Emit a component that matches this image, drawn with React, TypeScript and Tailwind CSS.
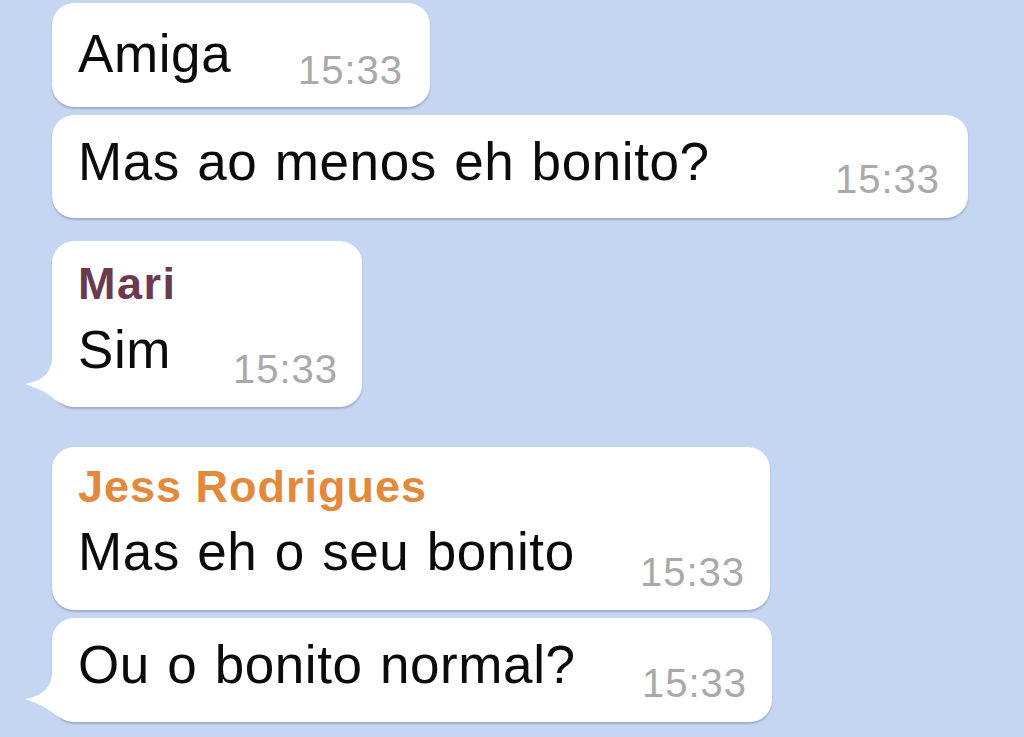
const FONT = "font-['Liberation_Sans',Arial,sans-serif]";

function Tail() {
    return (
        <svg className="absolute -left-[30px] bottom-0 -z-10" width="60" height="50" viewBox="0 0 60 50">
            <path d="M30 0 C30 14 22 24 3 27 C14 31 22 34 30 40 C36 46 44 50 60 50 L60 0 Z" fill="#ffffff" />
        </svg>
    );
}

function Time({ className }: { className: string }) {
    return (
        <span className={`text-[40px] leading-[48px] tracking-[1px] text-[#a9a9ab] ${className}`}>
            15:33
        </span>
    );
}

const MSG = "text-[53px] leading-[60px] text-[#0b0b0b] tracking-[0.6px] [word-spacing:2px]";
const BUBBLE = "relative isolate rounded-[22px] bg-white pl-[26px] shadow-[0_2px_2px_rgba(60,70,90,0.28)]";

export default function App() {
    return (
        <div className={`min-h-screen w-full bg-[#c5d6f2] pt-[3px] pl-[52px] ${FONT}`}>
            {/* Amiga */}
            <div className={`${BUBBLE} flex h-[104px] w-[378px] items-start justify-between pr-[27px]`}>
                <span className={`mt-[21px] ${MSG}`}>Amiga</span>
                <Time className="mt-[43px]" />
            </div>

            {/* Mas ao menos */}
            <div className={`${BUBBLE} mt-[8px] flex h-[103px] w-[916px] items-start justify-between pr-[28px]`}>
                <span className={`mt-[17px] ${MSG}`}>Mas ao menos eh bonito?</span>
                <Time className="mt-[40px]" />
            </div>

            {/* Mari */}
            <div className={`${BUBBLE} mt-[23px] flex h-[166px] w-[310px] flex-col pr-[24px]`}>
                <span className="mt-[17px] text-[45px] font-semibold leading-[52px] tracking-[1.5px] text-[#6b3a50]">Mari</span>
                <div className="flex items-start justify-between">
                    <span className={`mt-[10px] ${MSG}`}>Sim</span>
                    <Time className="mt-[35px]" />
                </div>
                <Tail />
            </div>

            {/* Jess */}
            <div className={`${BUBBLE} mt-[40px] flex h-[163px] w-[718px] flex-col pr-[25px]`}>
                <span className="mt-[14px] text-[45px] font-semibold leading-[52px] tracking-[1px] text-[#e2893b]">Jess Rodrigues</span>
                <div className="flex items-start justify-between">
                    <span className={`mt-[9px] ${MSG}`}>Mas eh o seu bonito</span>
                    <Time className="mt-[35px]" />
                </div>
            </div>

            <div className={`${BUBBLE} mt-[8px] flex h-[104px] w-[720px] items-start justify-between pr-[25px]`}>
                <span className={`mt-[17px] ${MSG}`}>Ou o bonito normal?</span>
                <Time className="mt-[41px]" />
                <Tail />
            </div>
        </div>
    );
}
